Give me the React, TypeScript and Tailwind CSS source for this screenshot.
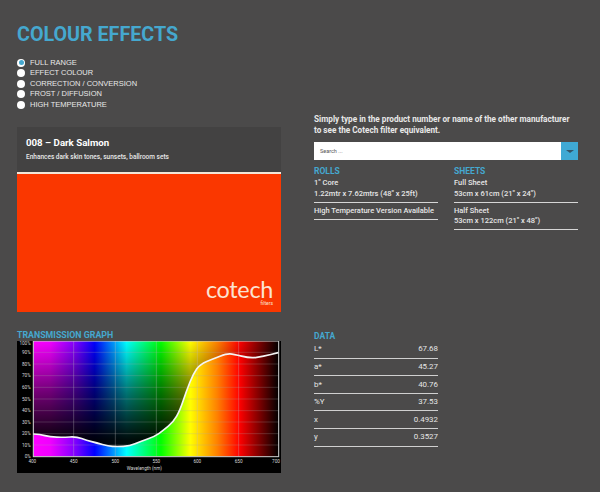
const roboto = "font-['Roboto',sans-serif]";

const ranges = ["FULL RANGE", "EFFECT COLOUR", "CORRECTION / CONVERSION", "FROST / DIFFUSION", "HIGH TEMPERATURE"];

const data = [
  ["L*", "67.68"],
  ["a*", "45.27"],
  ["b*", "40.76"],
  ["%Y", "37.53"],
  ["x", "0.4932"],
  ["y", "0.3527"],
];

const points = [
  [100, 326], [120, 327], [150, 335], [190, 336], [230, 334], [260, 345], [290, 353], [325, 362],
  [350, 364], [390, 362], [420, 349], [465, 333], [490, 315], [520, 290], [540, 255], [560, 195],
  [580, 145], [600, 117], [640, 100], [680, 85], [700, 86], [750, 99], [790, 93], [835, 82],
];

// smooth the measured points with midpoints so the line has no corners
function smoothCurve() {
  let d = `M${points[0][0]} ${points[0][1]}`;
  for (let i = 1; i < points.length - 1; i++) {
    const midX = (points[i][0] + points[i + 1][0]) / 2;
    const midY = (points[i][1] + points[i + 1][1]) / 2;
    d += ` Q${points[i][0]} ${points[i][1]} ${midX} ${midY}`;
  }
  const last = points[points.length - 1];
  return `${d} L${last[0]} ${last[1]}`;
}

const curve = smoothCurve();

const percents = [
  ["100%", 47, 58],
  ["90%", 81, 86],
  ["80%", 116, 121],
  ["70%", 151, 156],
  ["60%", 186, 191],
  ["50%", 221, 226],
  ["40%", 256, 261],
  ["30%", 290, 295],
  ["20%", 325, 330],
  ["10%", 359, 364],
  ["0%", 394, 399],
] as const;

const wavelengths = [
  ["400", 100, 97],
  ["450", 221, 221],
  ["500", 346, 346],
  ["550", 469, 469],
  ["600", 592, 592],
  ["650", 716, 716],
  ["700", 836, 828],
] as const;

function Graph() {
  return (
    <svg width="264" height="132" viewBox="51 47 792 396" className="block">
      <defs>
        <linearGradient id="spectrum" x1="0" x2="1" y1="0" y2="0">
          <stop offset="0" stopColor="#ff00ff" />
          <stop offset="0.07" stopColor="#f000ff" />
          <stop offset="0.17" stopColor="#8000ff" />
          <stop offset="0.25" stopColor="#0000ff" />
          <stop offset="0.38" stopColor="#00ffff" />
          <stop offset="0.52" stopColor="#00ff00" />
          <stop offset="0.64" stopColor="#ffff00" />
          <stop offset="0.75" stopColor="#ff8000" />
          <stop offset="0.84" stopColor="#ff0000" />
          <stop offset="1" stopColor="#000000" />
        </linearGradient>
        <linearGradient id="fade" x1="0" x2="0" y1="47" y2="394" gradientUnits="userSpaceOnUse">
          <stop offset="0" stopColor="#000" stopOpacity="0" />
          <stop offset="0.45" stopColor="#000" stopOpacity="0.55" />
          <stop offset="0.85" stopColor="#000" stopOpacity="0.95" />
        </linearGradient>
      </defs>
      <rect x="51" y="47" width="792" height="396" fill="#000" />
      <rect x="100" y="47" width="736" height="347" fill="url(#spectrum)" />
      <path d={`${curve} L835 47 L100 47 Z`} fill="url(#fade)" />
      {percents.map(([label, y, textY]) => (
        <g key={label}>
          <line x1="100" x2="836" y1={y} y2={y} stroke="#aaa" strokeOpacity="0.3" strokeWidth="2.5" />
          <text x="92" y={textY} textAnchor="end" fontSize="14" fill="#d8d8d8" fontFamily="Roboto, sans-serif">
            {label}
          </text>
        </g>
      ))}
      {wavelengths.map(([label, x, textX]) => (
        <g key={label}>
          <line x1={x} x2={x} y1="47" y2="394" stroke="#bbb" strokeOpacity="0.4" strokeWidth="2.5" />
          <text x={textX} y="414" textAnchor="middle" fontSize="14" fill="#d8d8d8" fontFamily="Roboto, sans-serif">
            {label}
          </text>
        </g>
      ))}
      <rect x="100" y="47" width="736" height="347" fill="none" stroke="#c8c8c8" strokeWidth="3" />
      <path d={curve} fill="none" stroke="#f4f4f4" strokeWidth="5" strokeLinejoin="round" />
      <text x="433" y="434" textAnchor="middle" fontSize="14" fill="#d8d8d8" fontFamily="Roboto, sans-serif">
        Wavelength (nm)
      </text>
    </svg>
  );
}

function SizeBlock(props: { lines: string[] }) {
  return (
    <div className="border-b border-[#d6d6d6] pb-[2.5px] pt-[3px] leading-[10.5px]">
      {props.lines.map((line) => (
        <div key={line} className="h-[10.5px] whitespace-nowrap">
          {line}
        </div>
      ))}
    </div>
  );
}

export default function App() {
  return (
    <div className={`h-[492px] w-[600px] overflow-hidden bg-[#4b4a4a] ${roboto}`}>
      <div className="grid grid-cols-[264px_264px] gap-x-[33px] pl-[17px]">
        <div>
          <h1 className="pt-[22px] text-[19.7px] font-bold leading-[26px] text-[#45a8cf]">COLOUR EFFECTS</h1>
          <div className="mt-[9.5px] font-['Liberation_Sans',sans-serif] text-[7.5px] leading-[10.5px] text-[#e8e8e8]">
            {ranges.map((range, i) => (
              <div key={range} className="flex h-[10.5px] items-center gap-[5px]">
                <span className="flex h-[8px] w-[8px] items-center justify-center rounded-full bg-white">
                  {i === 0 && <span className="h-[5px] w-[5px] rounded-full bg-[#45a8cf]" />}
                </span>
                {range}
              </div>
            ))}
          </div>
          <div className="mt-[16.5px] h-[45px] bg-[#434242] pl-[9px] pt-[9px] text-white">
            <div className="text-[9.7px] font-bold leading-[14px]">008 – Dark Salmon</div>
            <div className="mt-[3px] text-[6.5px] font-medium leading-[8px] text-[#e8e8e8]">
              Enhances dark skin tones, sunsets, ballroom sets
            </div>
          </div>
          <div className="relative h-[140px] border-t-2 border-[#f3e6d8] bg-[#fa3700]">
            <div className="absolute right-[8px] top-[105px] text-right text-[#fbe3d2]">
              <div className="font-['Lato',sans-serif] text-[23.4px] leading-[21px] tracking-[-0.3px]">cotech</div>
              <div className="text-[5px] leading-[6px]">filters</div>
            </div>
          </div>
          <h2 className="mt-[18px] text-[8.8px] font-bold leading-[11px] text-[#45a8cf]">TRANSMISSION GRAPH</h2>
          <Graph />
        </div>
        <div className="text-[7.5px] font-medium text-[#e6e6e6]">
          <p className="mt-[114px] whitespace-nowrap text-[8.2px] font-bold leading-[10.5px] text-[#e8e8e8]">
            Simply type in the product number or name of the other manufacturer
            <br />
            to see the Cotech filter equivalent.
          </p>
          <div className="mt-[7px] flex h-[18px] w-[264px]">
            <div className="flex-1 bg-white pl-[6px] text-[5.5px] font-normal leading-[18px] text-[#555]">Search ...</div>
            <div className="flex w-[17px] items-center justify-center bg-[#3fa9d4]">
              <span className="h-0 w-0 border-x-[4px] border-t-[3px] border-x-transparent border-t-[#33566a]" />
            </div>
          </div>
          <div className="mt-[8px] grid grid-cols-[124px_124px] gap-x-[16px]">
            <div>
              <h3 className="text-[8.5px] font-bold leading-[7px] text-[#45a8cf]">ROLLS</h3>
              <SizeBlock lines={['1" Core', '1.22mtr x 7.62mtrs (48" x 25ft)']} />
              <SizeBlock lines={["High Temperature Version Available"]} />
            </div>
            <div>
              <h3 className="text-[8.5px] font-bold leading-[7px] text-[#45a8cf]">SHEETS</h3>
              <SizeBlock lines={["Full Sheet", '53cm x 61cm (21" x 24")']} />
              <SizeBlock lines={["Half Sheet", '53cm x 122cm (21" x 48")']} />
            </div>
          </div>
          <div className="mt-[101px] w-[124px] text-[7.9px] font-normal">
            <h3 className="text-[8.5px] font-bold leading-[10px] text-[#45a8cf]">DATA</h3>
            {data.map(([label, value]) => (
              <div key={label} className="flex h-[17.6px] items-center justify-between border-b border-[#d0d0d0]">
                <span>{label}</span>
                <span>{value}</span>
              </div>
            ))}
          </div>
        </div>
      </div>
    </div>
  );
}
